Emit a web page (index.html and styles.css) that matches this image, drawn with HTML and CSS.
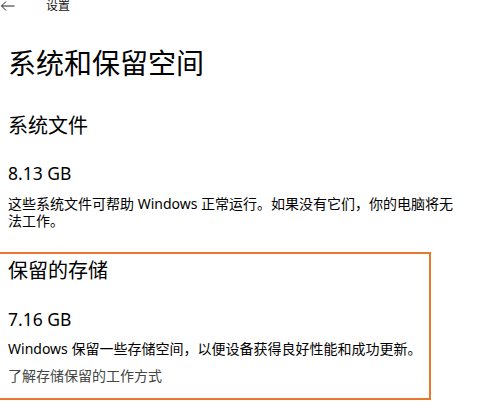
FILE: index.html
```html
<!DOCTYPE html>
<html lang="zh-CN">
<head>
<meta charset="utf-8">
<title>设置</title>
<link rel="stylesheet" href="styles.css">
</head>
<body>
<div class="page">
  <header class="topbar">
    <svg class="back" width="15" height="11" viewBox="0 0 15 11" aria-hidden="true">
      <path d="M14.5 5H1.5M6 0.5L1.5 5L6 9.5" fill="none" stroke="#222" stroke-width="1"/>
    </svg>
    <span class="app-name">设置</span>
  </header>

  <h1 class="title">系统和保留空间</h1>

  <section class="group">
    <h2 class="group-title">系统文件</h2>
    <div class="size">8.13 GB</div>
    <p class="desc">这些系统文件可帮助 Windows 正常运行。如果没有它们，你的电脑将无法工作。</p>
  </section>

  <section class="group reserved">
    <h2 class="group-title">保留的存储</h2>
    <div class="size">7.16 GB</div>
    <p class="desc">Windows 保留一些存储空间，以便设备获得良好性能和成功更新。</p>
    <a class="link" href="#">了解存储保留的工作方式</a>
  </section>
</div>
</body>
</html>
```

FILE: styles.css
```css
html, body {
  margin: 0;
  padding: 0;
  background: #ffffff;
}

body {
  font-family: "Noto Sans", "Noto Sans CJK SC", sans-serif;
  color: #000000;
  width: 486px;
  height: 409px;
  overflow: hidden;
}

.page {
  width: 458px;
}

.topbar {
  display: flex;
  align-items: center;
  height: 12px;
}

.back {
  display: block;
  margin-left: 0;
}

.app-name {
  margin-left: 31px;
  font-size: 12px;
  line-height: 12px;
  color: #111;
}

.title {
  margin: 33px 0 0 8px;
  font-size: 28px;
  line-height: 36px;
  font-weight: 400;
}

.group {
  margin-left: 8px;
}

.group-title {
  margin: 31px 0 0 0;
  font-size: 20px;
  line-height: 28px;
  font-weight: 400;
}

.size {
  margin-top: 21px;
  font-size: 17.5px;
  line-height: 24px;
}

.desc {
  margin: 10px 0 0 0;
  font-size: 14px;
  line-height: 17px;
}

.reserved {
  margin-left: 0;
  margin-top: 23px;
  width: 421px;
  padding: 3px 0 14px 8px;
  border: 2px solid #e9772c;
  border-left: none;
}

.reserved .group-title {
  margin-top: 0;
}

.reserved .size {
  margin-top: 22px;
}

.reserved .desc {
  margin-top: 9px;
}

.link {
  display: block;
  margin-top: 10px;
  font-size: 14px;
  line-height: 17px;
  color: #444444;
  text-decoration: none;
}
```
